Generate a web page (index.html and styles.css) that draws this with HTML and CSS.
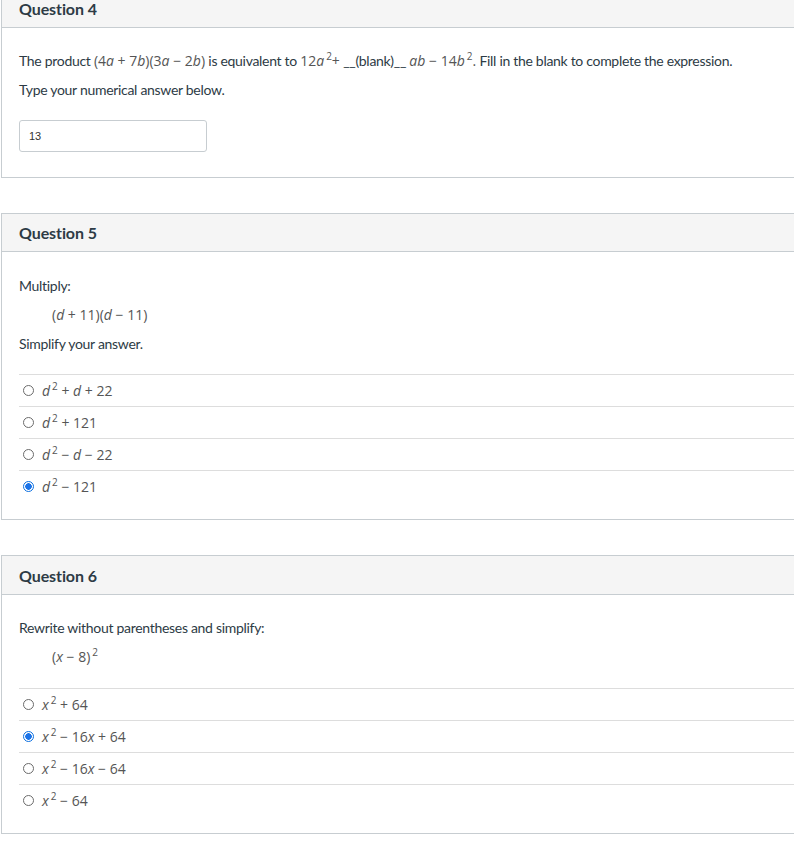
FILE: index.html
```html
<!DOCTYPE html>
<html>
<head>
<meta charset="utf-8">
<link rel="stylesheet" href="styles.css">
</head>
<body>
<div class="page">
  <section class="card card-q4">
    <header class="card-header"><h2>Question 4</h2></header>
    <div class="card-body">
      <p class="text">The product <span class="math">(4<i>a</i> + 7<i>b</i>)(3<i>a</i> − 2<i>b</i>)</span> is equivalent to <span class="math">12<i>a</i><sup>2</sup>+</span> __(blank)__ <span class="math"><i>ab</i> − 14<i>b</i><sup>2</sup>.</span> Fill in the blank to complete the expression.</p>
      <p class="text">Type your numerical answer below.</p>
      <div class="answer-input">13</div>
    </div>
  </section>

  <section class="card card-q5">
    <header class="card-header"><h2>Question 5</h2></header>
    <div class="card-body">
      <p class="text">Multiply:</p>
      <p class="math-block"><span class="math">(<i>d</i> + 11)(<i>d</i> − 11)</span></p>
      <p class="text">Simplify your answer.</p>
      <ul class="options">
        <li class="option"><span class="radio"></span><span class="math"><i>d</i><sup>2</sup> + <i>d</i> + 22</span></li>
        <li class="option"><span class="radio"></span><span class="math"><i>d</i><sup>2</sup> + 121</span></li>
        <li class="option"><span class="radio"></span><span class="math"><i>d</i><sup>2</sup> − <i>d</i> − 22</span></li>
        <li class="option"><span class="radio checked"></span><span class="math"><i>d</i><sup>2</sup> − 121</span></li>
      </ul>
    </div>
  </section>

  <section class="card card-q6">
    <header class="card-header"><h2>Question 6</h2></header>
    <div class="card-body">
      <p class="text">Rewrite without parentheses and simplify:</p>
      <p class="math-block"><span class="math">(<i>x</i> − 8)<sup>2</sup></span></p>
      <ul class="options">
        <li class="option"><span class="radio"></span><span class="math"><i>x</i><sup>2</sup> + 64</span></li>
        <li class="option"><span class="radio checked"></span><span class="math"><i>x</i><sup>2</sup> − 16<i>x</i> + 64</span></li>
        <li class="option"><span class="radio"></span><span class="math"><i>x</i><sup>2</sup> − 16<i>x</i> − 64</span></li>
        <li class="option"><span class="radio"></span><span class="math"><i>x</i><sup>2</sup> − 64</span></li>
      </ul>
    </div>
  </section>
</div>
</body>
</html>
```

FILE: styles.css
```css
html, body {
  margin: 0;
  padding: 0;
  background: #ffffff;
  overflow: hidden;
}

body {
  font-family: Lato, "Liberation Sans", sans-serif;
  font-size: 14px;
  color: #2d3b45;
}

.page {
  display: flex;
  flex-direction: column;
  gap: 35px;
  margin-top: -11px;
  padding-left: 1px;
  margin-right: -30px;
}

.card {
  border: 1px solid #c7cdd1;
  border-right: none;
  background: #fff;
}

.card-header {
  background: #f5f5f5;
  border-bottom: 1px solid #c7cdd1;
  height: 37px;
  display: flex;
  align-items: center;
  padding-left: 17px;
}

.card-q6 .card-header {
  height: 38px;
}

.card-header h2 {
  margin: 0;
  font-size: 16px;
  font-weight: 700;
  color: #2d3b45;
  letter-spacing: -0.1px;
}

.card-body {
  padding: 23px 0 0 17px;
}

.card-q5 .card-body {
  padding-top: 24px;
}

.text {
  margin: 0 0 9px;
  line-height: 20px;
  letter-spacing: -0.3px;
}

.card-q4 .card-body {
  padding-bottom: 25px;
}

.math {
  font-family: "Open Sans", "DejaVu Sans", sans-serif;
  color: #555;
  font-size: 14px;
  letter-spacing: 0;
}

.math i {
  font-style: italic;
}

.math sup {
  font-size: 10px;
  vertical-align: 6px;
  line-height: 0;
  margin-left: 2px;
}

.math-block {
  margin: 0 0 9px;
  padding-left: 33px;
  line-height: 20px;
}

.answer-input {
  margin-top: 20px;
  width: 177px;
  height: 30px;
  border: 1px solid #c7cdd1;
  border-radius: 3px;
  padding-left: 9px;
  display: flex;
  align-items: center;
  font-family: "Liberation Sans", Arial, sans-serif;
  font-size: 11px;
  color: #333;
}

.options {
  list-style: none;
  margin: 20px 0 0;
  padding: 0 0 17px;
}

.card-q6 .options {
  margin-top: 21px;
}

.option {
  display: flex;
  align-items: center;
  gap: 8px;
  height: 31px;
  border-top: 1px solid #dddddd;
  padding-left: 4px;
}

.radio {
  border: 1px solid #6b6b6b;
  border-radius: 50%;
  box-sizing: border-box;
  width: 11px;
  height: 11px;
  background: #fff;
}

.radio.checked {
  border: 1px solid #0b6fe0;
  background: radial-gradient(circle, #1a73e8 0, #1a73e8 3px, #fff 3.5px);
}
```
